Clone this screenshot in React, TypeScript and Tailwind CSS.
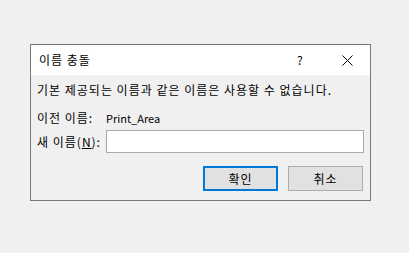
import React from 'react';

const font = { fontFamily: '"Noto Sans CJK KR", "Noto Sans", sans-serif' };

export default function App() {
  return (
    <div className="w-[409px] h-[253px] bg-[#f0f0f0] pt-[44px] pl-[30px]" style={font}>
      <div className="w-[341px] h-[157px] border border-[#787878] flex flex-col text-[#000] text-[12px] tracking-[1px]">
        {/* Title bar */}
        <div className="h-[30px] bg-white flex items-center pl-[8px]">
          <span className="flex-1">이름 충돌</span>
          <span className="w-[8px] mr-[37px] tracking-normal">?</span>
          <svg width="11" height="11" viewBox="0 0 11 11" className="mr-[17px]">
            <path d="M0.5 0.5 L10.5 10.5 M10.5 0.5 L0.5 10.5" stroke="#000" strokeWidth="1" />
          </svg>
        </div>

        {/* Body */}
        <div className="flex flex-col px-[6px] pt-[7px]">
          <p className="leading-[16px] whitespace-nowrap">기본 제공되는 이름과 같은 이름은 사용할 수 없습니다.</p>
          <div className="flex items-center leading-[16px] mt-[12px]">
            <span className="w-[69px]">이전 이름:</span>
            <span className="text-[11px] tracking-normal">Print_Area</span>
          </div>
          <div className="flex items-center mt-[4px]">
            <span className="w-[69px] whitespace-nowrap">
              새 이름(<span className="underline">N</span>):
            </span>
            <input className="w-[258px] h-[23px] bg-white border border-[#ababab] outline-none" />
          </div>
          <div className="flex justify-end gap-[10px] mt-[13px] pr-[1px]">
            <button className="w-[75px] h-[25px] bg-[#e1e1e1] border-2 border-[#0078d7] text-[12px] tracking-[1px]">확인</button>
            <button className="w-[75px] h-[25px] bg-[#e1e1e1] border border-[#adadad] text-[12px] tracking-[1px]">취소</button>
          </div>
        </div>
      </div>
    </div>
  );
}
